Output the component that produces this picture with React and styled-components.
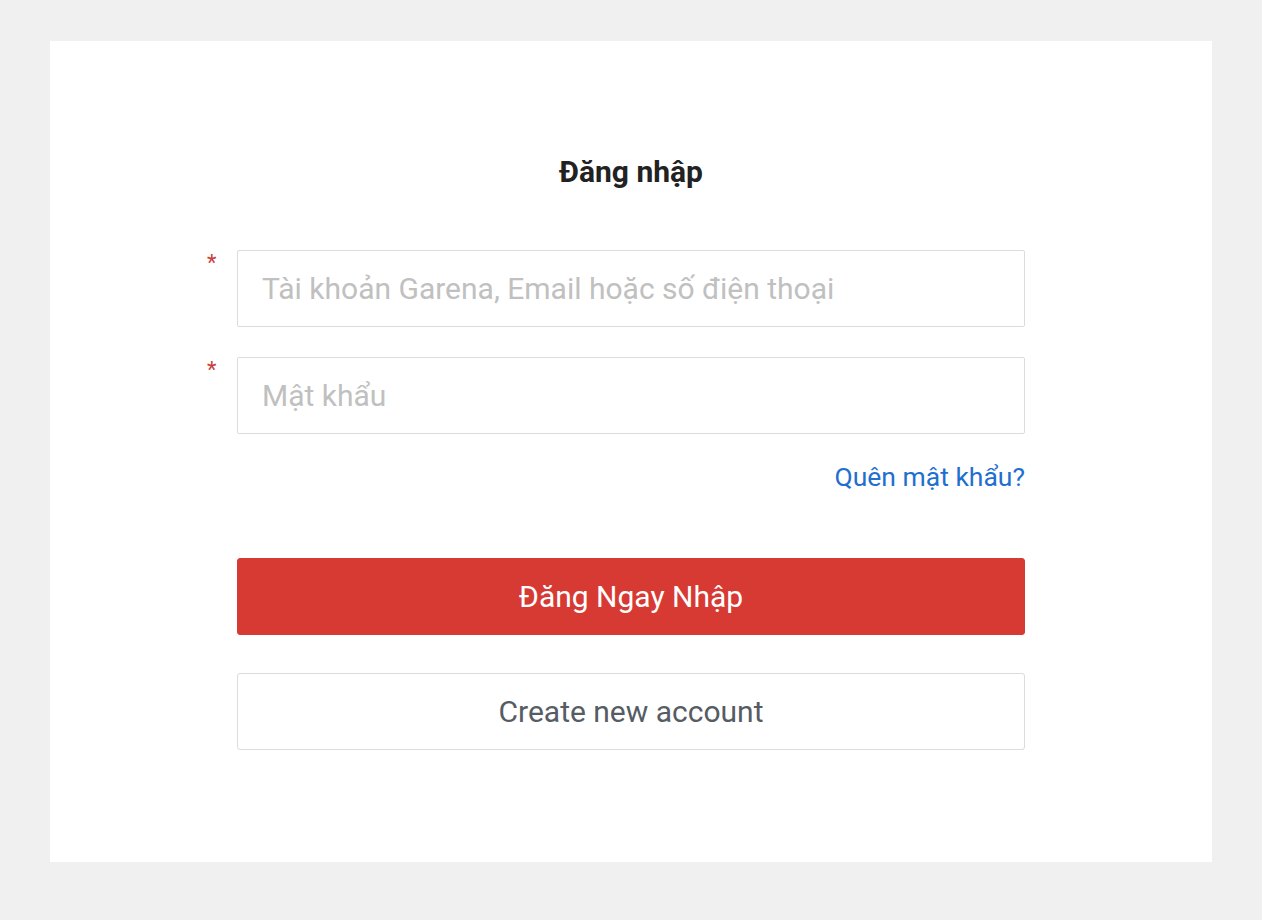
import styled, { createGlobalStyle } from "styled-components";

const Global = createGlobalStyle`
  html, body { margin: 0; padding: 0; }
  body {
    background: #f0f0f0;
    font-family: Roboto, "Noto Sans", "Liberation Sans", sans-serif;
  }
`;

const Page = styled.div`
  padding: 41px 0 0 50px;
  min-height: 920px;
  box-sizing: border-box;
`;

const Card = styled.div`
  width: 1162px;
  height: 821px;
  background: #ffffff;
  display: flex;
  flex-direction: column;
  align-items: center;
  padding-top: 113px;
  box-sizing: border-box;
`;

const Title = styled.h1`
  margin: 0;
  font-size: 30px;
  line-height: 36px;
  font-weight: 700;
  color: #222222;
`;

const Form = styled.form`
  width: 788px;
  margin-top: 60px;
  display: flex;
  flex-direction: column;
`;

const Field = styled.div`
  position: relative;
  margin-bottom: ${(p) => p.$gap || 0}px;
`;

const Required = styled.span`
  position: absolute;
  left: -30px;
  top: 0;
  color: #c9403a;
  font-size: 22px;
  line-height: 26px;
`;

const Input = styled.input`
  width: 100%;
  height: 77px;
  box-sizing: border-box;
  border: 1px solid #dcdcdc;
  border-radius: 2px;
  padding: 0 24px;
  font-family: inherit;
  font-size: 30px;
  color: #333;
  outline: none;
  &::placeholder { color: #c0c0c0; }
`;

const Forgot = styled.a`
  align-self: flex-end;
  margin-top: 28px;
  font-size: 26.5px;
  line-height: 30px;
  color: #1f6fcf;
  text-decoration: none;
`;

const Button = styled.button`
  width: 100%;
  height: 77px;
  border-radius: 3px;
  font-family: inherit;
  font-size: 30px;
  cursor: pointer;
  margin-top: ${(p) => p.$top}px;
  background: ${(p) => (p.$primary ? "#d63a32" : "#ffffff")};
  color: ${(p) => (p.$primary ? "#ffffff" : "#555c63")};
  border: 1px solid ${(p) => (p.$primary ? "#d63a32" : "#dcdcdc")};
`;

export default function App() {
  return (
    <>
      <Global />
      <Page>
        <Card>
          <Title>Đăng nhập</Title>
          <Form onSubmit={(e) => e.preventDefault()}>
            <Field $gap={30}>
              <Required>*</Required>
              <Input placeholder="Tài khoản Garena, Email hoặc số điện thoại" />
            </Field>
            <Field>
              <Required>*</Required>
              <Input type="password" placeholder="Mật khẩu" />
            </Field>
            <Forgot href="#">Quên mật khẩu?</Forgot>
            <Button $primary $top={66}>Đăng Ngay Nhập</Button>
            <Button $top={38} type="button">Create new account</Button>
          </Form>
        </Card>
      </Page>
    </>
  );
}
